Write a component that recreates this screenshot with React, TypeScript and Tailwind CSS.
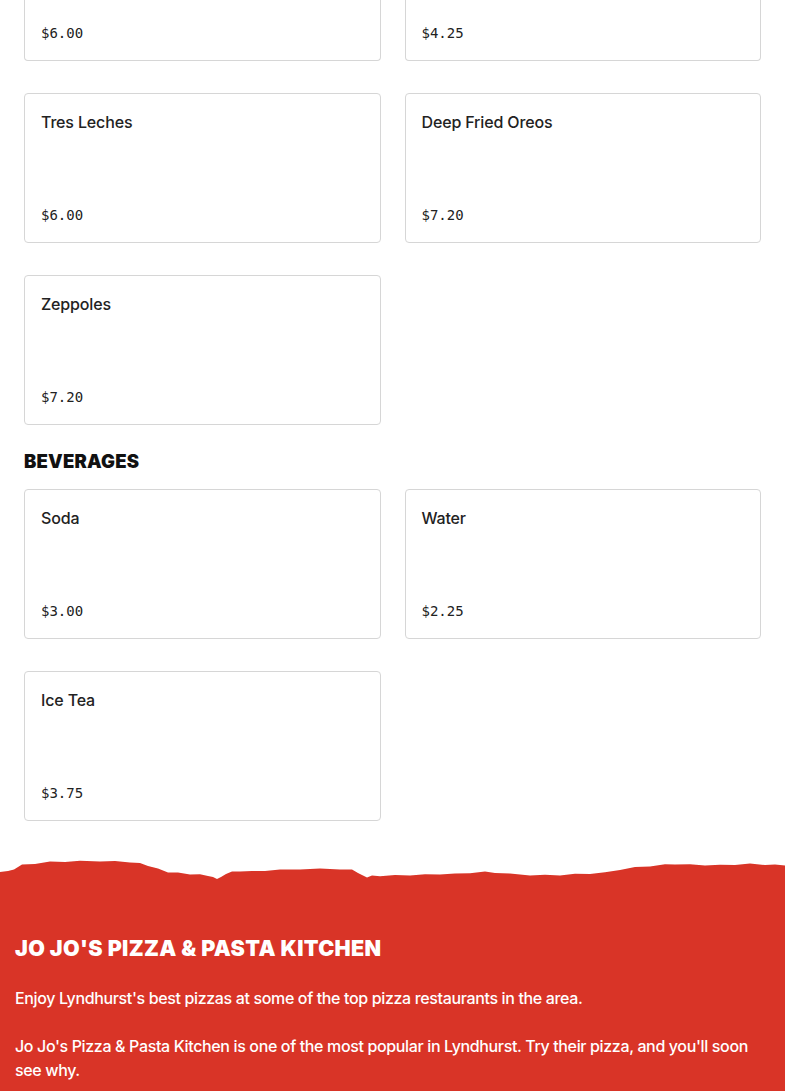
import React from 'react';

type Item = { name: string; price: string };

// the first row of desserts continues above the top of the view
const topRow: Item[] = [
  { name: 'Cannoli', price: '$6.00' },
  { name: 'Gelato', price: '$4.25' },
];

const desserts: Item[][] = [
  [
    { name: 'Tres Leches', price: '$6.00' },
    { name: 'Deep Fried Oreos', price: '$7.20' },
  ],
  [{ name: 'Zeppoles', price: '$7.20' }],
];

const beverages: Item[] = [
  { name: 'Soda', price: '$3.00' },
  { name: 'Water', price: '$2.25' },
  { name: 'Ice Tea', price: '$3.75' },
];

const priceCls = "text-[14px] leading-5 text-[#222222] font-['DejaVu_Sans_Mono',monospace]";

function MenuCard({ item }: { item: Item }) {
  return (
    <div className="h-[150px] flex flex-col justify-between border border-[#d6d6d6] rounded-[4px] bg-white pt-4 px-4 pb-[17px]">
      <span className="text-[16px] leading-6 font-medium text-[#222222] font-['Inter',sans-serif] tracking-[-0.15px]">
        {item.name}
      </span>
      <span className={priceCls}>{item.price}</span>
    </div>
  );
}

function CardTail({ item }: { item: Item }) {
  return (
    <div className="h-[61px] flex flex-col justify-end border border-t-0 border-[#d6d6d6] rounded-b-[4px] bg-white px-4 pb-[17px]">
      <span className={priceCls}>{item.price}</span>
    </div>
  );
}

// torn paper edge points (x, y) in the svg's own space
const edge: [number, number][] = [
  [0, 16.7], [8, 16.5], [14, 14], [22, 10], [35, 8.5], [50, 7], [65, 6.5], [80, 6.2], [100, 6],
  [115, 6.4], [130, 7], [140, 8.5], [148, 10.5], [158, 14], [168, 17], [178, 18], [190, 19],
  [200, 19.6], [208, 20.5], [213, 22.5], [217, 23.7], [221, 22.5], [226, 18.5], [232, 17],
  [240, 16.2], [252, 16.5], [265, 15.6], [280, 15], [300, 14], [320, 13.8], [340, 14], [352, 15],
  [358, 17.5], [363, 21], [367, 22], [372, 21], [380, 20.8], [395, 20.3], [410, 20], [425, 19.6],
  [440, 19.2], [455, 18.8], [470, 17.8], [485, 16.8], [495, 17.5], [510, 19], [530, 20], [545, 20.2],
  [560, 20], [575, 19.2], [590, 18.5], [605, 17.6], [620, 14.6], [635, 12.5], [650, 11], [665, 9.6],
  [675, 9], [690, 9.6], [705, 10], [720, 10.2], [735, 9.6], [750, 9], [765, 9.6], [775, 10], [785, 10],
];

function TornEdge() {
  const d =
    'M0 25 ' +
    edge
      .map(([x, y], i) => {
        const j = i % 2 === 0 ? 0.4 : -0.4;
        return `L${x} ${(y + j).toFixed(1)}`;
      })
      .join(' ') +
    ' L785 25 Z';
  return (
    <svg width="785" height="25" viewBox="0 0 785 25" className="block w-full" preserveAspectRatio="none">
      <path d={d} fill="#d93427" />
    </svg>
  );
}

export default function App() {
  return (
    <div className="min-h-screen bg-white overflow-hidden">
      <div className="px-6 pb-[34px]">
        <div className="flex flex-col gap-8">
          <div className="grid grid-cols-2 gap-6">
            {topRow.map((it) => (
              <CardTail key={it.name} item={it} />
            ))}
          </div>
          {desserts.map((row, i) => (
            <div key={i} className="grid grid-cols-2 gap-6">
              {row.map((it) => (
                <MenuCard key={it.name} item={it} />
              ))}
            </div>
          ))}
        </div>

        <h2 className="mt-6 mb-4 text-[18.5px] leading-6 font-black tracking-[0.2px] text-[#111111] font-['Inter',sans-serif]">
          BEVERAGES
        </h2>

        <div className="grid grid-cols-2 gap-x-6 gap-y-8">
          {beverages.map((it) => (
            <MenuCard key={it.name} item={it} />
          ))}
        </div>
      </div>

      <TornEdge />
      <footer className="bg-[#d93427] px-[15px] pt-[54px] pb-10 text-white">
        <h3 className="text-[21.5px] leading-7 font-black tracking-[0.35px] font-['Inter',sans-serif]">
          JO JO'S PIZZA &amp; PASTA KITCHEN
        </h3>
        <div className="mt-6 flex flex-col gap-6 text-[16px] leading-6 font-medium font-['Inter',sans-serif] tracking-[-0.36px]">
          <p>Enjoy Lyndhurst's best pizzas at some of the top pizza restaurants in the area.</p>
          <p>
            Jo Jo's Pizza &amp; Pasta Kitchen is one of the most popular in Lyndhurst. Try their pizza, and you'll soon
            see why.
          </p>
        </div>
      </footer>
    </div>
  );
}
